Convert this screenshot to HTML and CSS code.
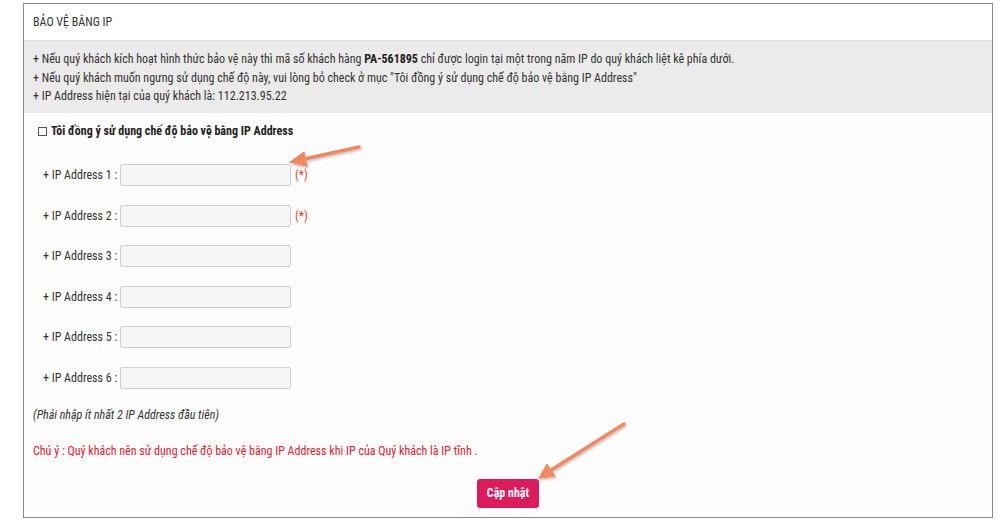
FILE: index.html
```html
<!DOCTYPE html>
<html lang="vi">
<head>
    <meta charset="UTF-8">
    <title>Bảo vệ bằng IP</title>
    <link rel="stylesheet" href="styles.css">
</head>
<body>
    <div class="panel">
        <div class="panel-head">BẢO VỆ BẰNG IP</div>
        <div class="notice">
            <p>+ Nếu quý khách kích hoạt hình thức bảo vệ này thì mã số khách hàng <b>PA-561895</b> chỉ được login tại một trong năm IP do quý khách liệt kê phía dưới.</p>
            <p>+ Nếu quý khách muốn ngưng sử dụng chế độ này, vui lòng bỏ check ở mục "Tôi đồng ý sử dụng chế độ bảo vệ bằng IP Address"</p>
            <p>+ IP Address hiện tại của quý khách là: 112.213.95.22</p>
        </div>
        <form class="ip-form">
            <label class="agree"><span class="box"></span>Tôi đồng ý sử dụng chế độ bảo vệ bằng IP Address</label>

            <div class="row"><span class="lbl">+ IP Address 1 :</span><input type="text"><span class="req">(*)</span></div>
            <div class="row"><span class="lbl">+ IP Address 2 :</span><input type="text"><span class="req">(*)</span></div>
            <div class="row"><span class="lbl">+ IP Address 3 :</span><input type="text"></div>
            <div class="row"><span class="lbl">+ IP Address 4 :</span><input type="text"></div>
            <div class="row"><span class="lbl">+ IP Address 5 :</span><input type="text"></div>
            <div class="row"><span class="lbl">+ IP Address 6 :</span><input type="text"></div>

            <p class="hint">(Phải nhập ít nhất 2 IP Address đầu tiên)</p>
            <p class="warn">Chú ý : Quý khách nên sử dụng chế độ bảo vệ bằng IP Address khi IP của Quý khách là IP tĩnh .</p>

            <div class="actions"><button type="button">Cập nhật</button></div>
        </form>
    </div>

    <svg class="arrows" width="998" height="522" viewBox="0 0 998 522">
        <defs>
            <filter id="sh" x="-20%" y="-20%" width="140%" height="140%">
                <feDropShadow dx="1" dy="1.5" stdDeviation="1.2" flood-color="#000" flood-opacity="0.25"/>
            </filter>
        </defs>
        <g fill="#f0895f" stroke="#f0895f" stroke-linecap="round" filter="url(#sh)">
            <line x1="359" y1="147" x2="300" y2="160" stroke-width="3.5"/>
            <polygon points="290,162 304,152 307,166" stroke-width="1" stroke-linejoin="round"/>
            <line x1="624" y1="424" x2="548" y2="472" stroke-width="3.5"/>
            <polygon points="539,478 547,464 555,476" stroke-width="1" stroke-linejoin="round"/>
        </g>
    </svg>
</body>
</html>
```

FILE: styles.css
```css
body {
    margin: 0;
    background: #fff;
    font-family: "Liberation Sans Narrow", "Roboto Condensed", "Liberation Sans", sans-serif;
    font-size: 12px;
    color: #333;
}
.panel {
    margin: 3px 0 0 23px;
    width: 968px;
    height: 513px;
    border: 1px solid #8a8a8a;
    background: #fdfdfd;
}
.panel-head {
    height: 36px;
    line-height: 36px;
    padding-left: 9px;
    background: #fff;
    border-bottom: 1px solid #e2e2e2;
    color: #333;
}
.notice {
    background: #ebebeb;
    padding: 9px 9px 9px 9px;
    height: 54px;
}
.notice p {
    margin: 0;
    line-height: 18.5px;
}
.notice b {
    color: #222;
}
.ip-form {
    padding: 10px 9px 0 9px;
}
.agree {
    display: flex;
    align-items: center;
    font-weight: bold;
    color: #222;
    height: 16px;
    margin-left: 5px;
}
.box {
    width: 7px;
    height: 7px;
    border: 1px solid #555;
    margin-right: 4px;
    background: #fff;
}
.row {
    display: flex;
    align-items: center;
    height: 22px;
    margin-top: 18.5px;
    margin-left: 10px;
}
.agree + .row {
    margin-top: 25px;
}
.lbl {
    width: 77px;
    white-space: nowrap;
}
.row input {
    width: 169px;
    height: 20px;
    padding: 0;
    border: 1px solid #cfcfcf;
    border-radius: 2px;
    background: #f6f6f6;
    box-sizing: content-box;
}
.req {
    color: #e53935;
    margin-left: 4px;
}
.hint {
    margin: 18px 0 0 0;
    font-style: italic;
    line-height: 16px;
}
.warn {
    margin: 20px 0 0 0;
    color: #e3202f;
    line-height: 16px;
}
.actions {
    text-align: center;
    margin-top: 20px;
}
.actions button {
    margin-left: 0;
    width: 62px;
    height: 29px;
    border: none;
    border-radius: 3px;
    background: #dc1b5c;
    color: #fff;
    font-family: inherit;
    font-size: 12px;
    font-weight: bold;
    cursor: pointer;
}
.arrows {
    position: absolute;
    left: 0;
    top: 0;
    pointer-events: none;
}
```
